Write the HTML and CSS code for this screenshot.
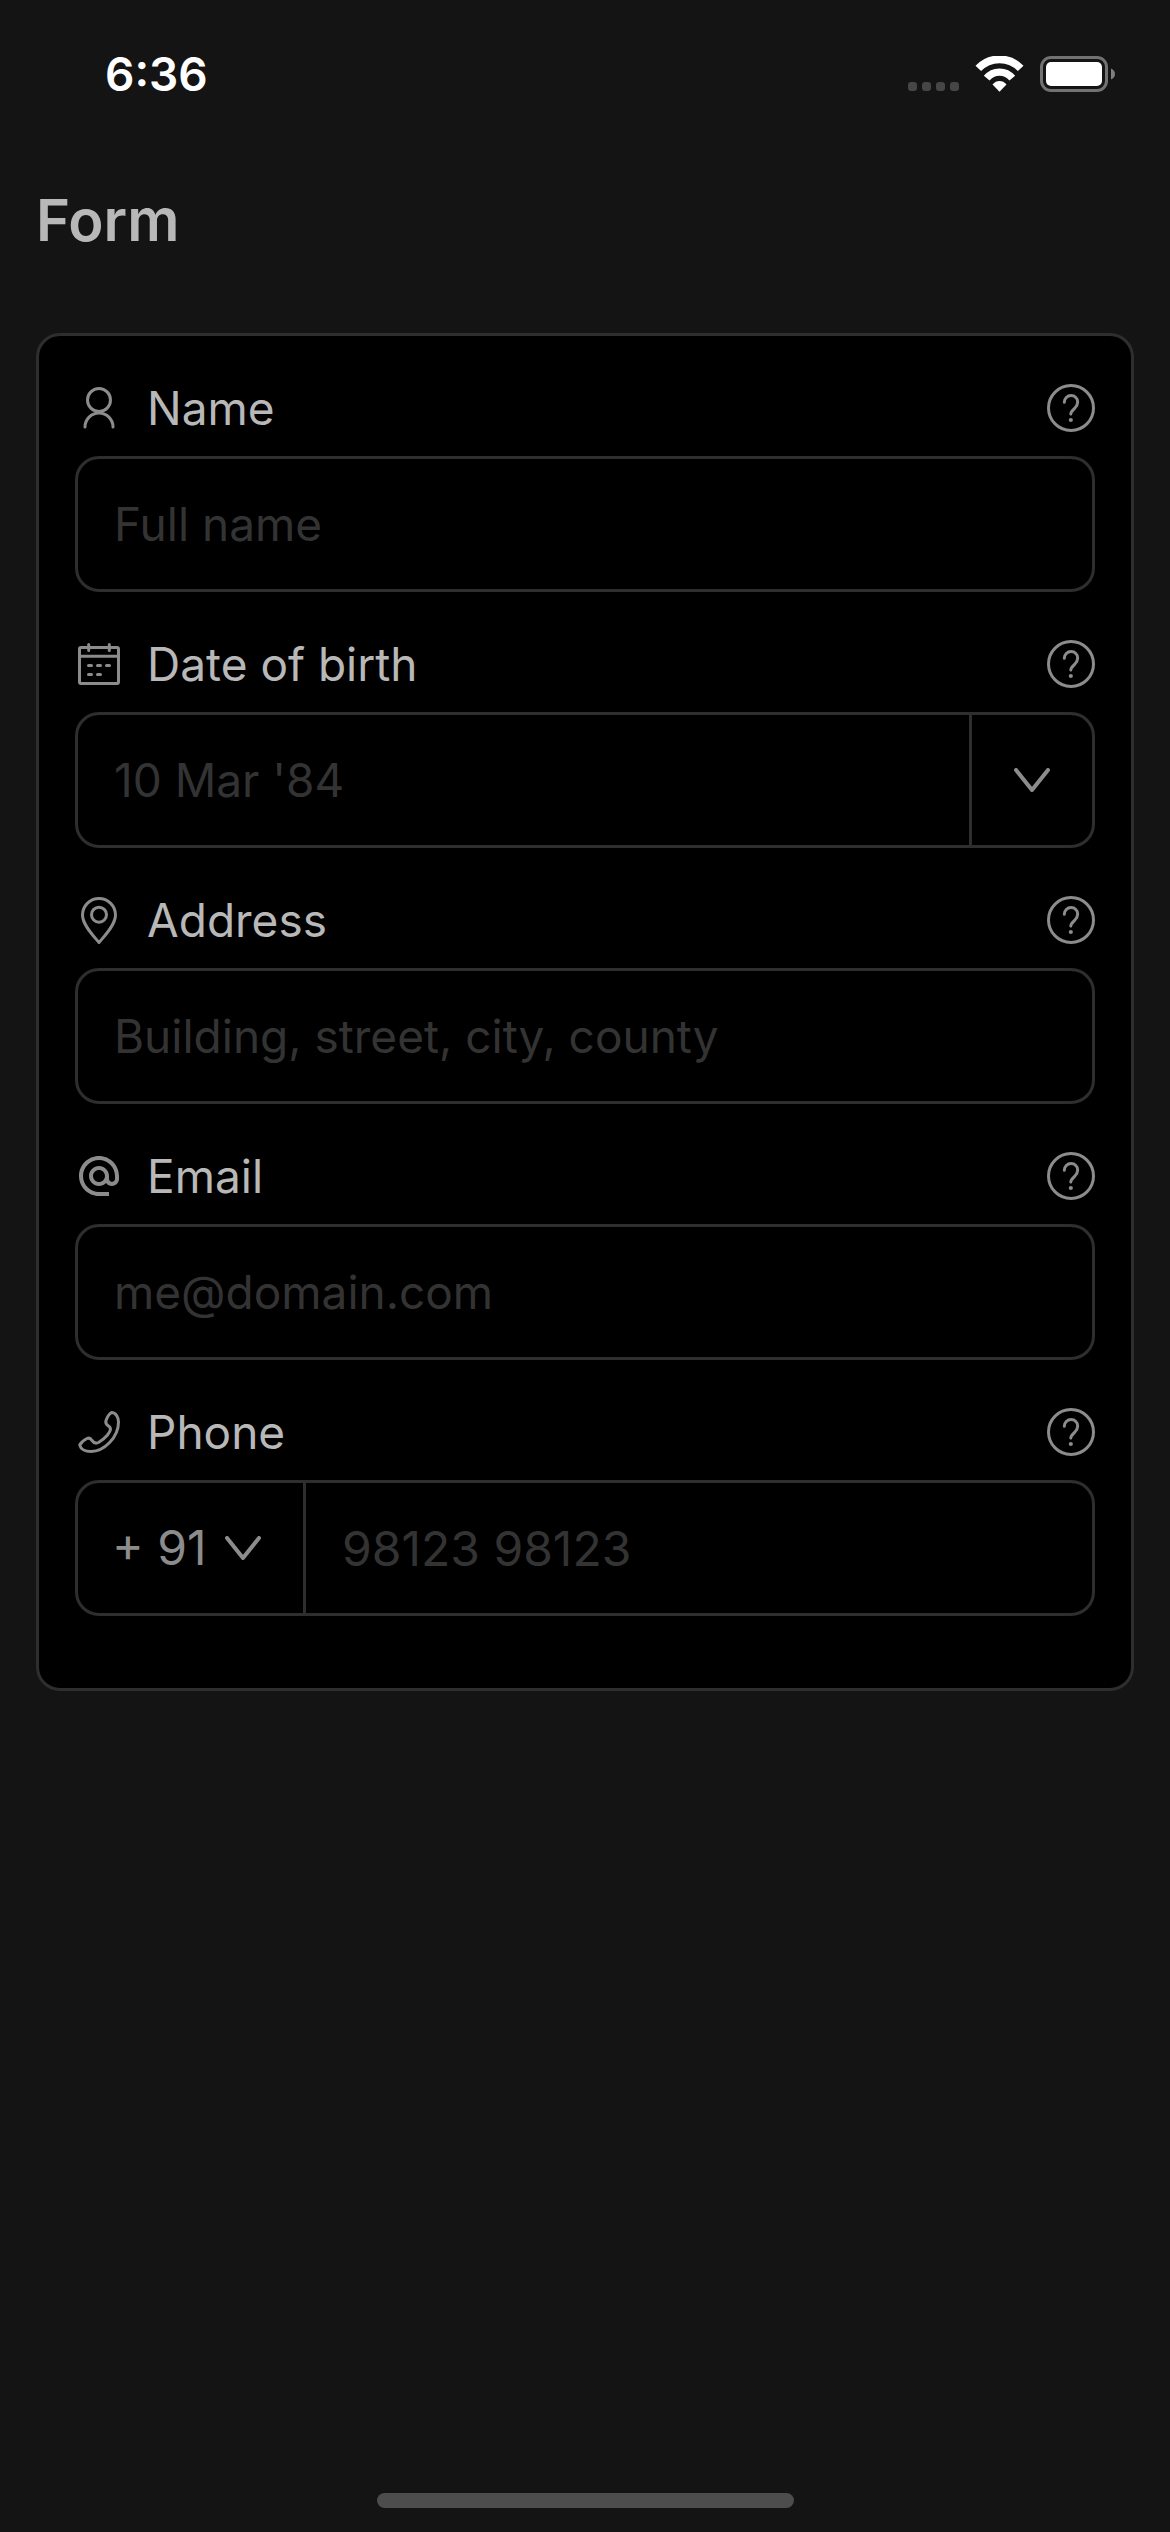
FILE: index.html
```html
<!DOCTYPE html>
<html lang="en">
<head>
<meta charset="utf-8">
<meta name="viewport" content="width=device-width, initial-scale=1">
<title>Form</title>
<link rel="stylesheet" href="styles.css">
</head>
<body>
<svg class="sprite" aria-hidden="true">
  <symbol id="help" viewBox="0 0 48 48">
    <circle cx="24" cy="24" r="22.5"/>
    <path d="M17.3 18.2A6.7 6.7 0 0 1 24 11.5C28 11.5 30.7 14.500 30.700 18C30.700 20.800 29.300 22.600 27.500 24.500C25.500 26.600 23.800 28 23.800 30"/>
    <circle class="solid" cx="23.800" cy="36" r="2.100"/>
  </symbol>
  <symbol id="chevron" viewBox="0 0 36 24">
    <path d="M2 2l16 20L34 2"/>
  </symbol>
</svg>

<header class="status">
  <time class="status-time">6:36</time>
  <div class="status-icons">
    <svg width="51" height="36" viewBox="0 0 51 36" fill="#464646" role="img" aria-label="No signal">
      <rect x="0" y="26" width="9" height="9" rx="3"/>
      <rect x="14" y="26" width="9" height="9" rx="3"/>
      <rect x="28" y="26" width="9" height="9" rx="3"/>
      <rect x="42" y="26" width="9" height="9" rx="3"/>
    </svg>
    <svg width="49" height="36" viewBox="0 0 49 36" fill="none" stroke="#fff" role="img" aria-label="Wi-Fi">
      <path stroke-width="7.700" d="M3.300 12.400A29.200 29.200 0 0 1 45.700 12.400"/>
      <path stroke-width="7.400" d="M11.700 22.200A16.600 16.600 0 0 1 37.300 22.200"/>
      <path fill="#fff" stroke="none" d="M24.500 35.700L17.500 28.400Q20.500 25 24.500 25T31.500 28.400Z"/>
    </svg>
    <svg width="75" height="36" viewBox="0 0 75 36" role="img" aria-label="Battery full">
      <rect x="1.500" y="1.500" width="65" height="33" rx="9.500" fill="none" stroke="#727272" stroke-width="3"/>
      <rect x="6" y="6" width="56" height="24" rx="5" fill="#fff"/>
      <path d="M71 12.500C73.500 13.500 75 15.500 75 18S73.500 22.500 71 23.500Z" fill="#7f7f7f"/>
    </svg>
  </div>
</header>

<main class="page">
  <h1 class="title">Form</h1>
  <form class="card">
    <div class="field">
      <div class="field-head">
        <svg class="icon" viewBox="0 0 48 48" aria-hidden="true">
          <circle cx="24" cy="16" r="11.500"/>
          <path d="M10 43A14 14 0 0 1 38 43"/>
        </svg>
        <label class="label" for="name">Name</label>
        <button class="help" type="button" aria-label="Help for name"><svg class="icon" aria-hidden="true"><use href="#help"/></svg></button>
      </div>
      <div class="control">
        <input class="input" id="name" type="text" placeholder="Full name">
      </div>
    </div>

    <div class="field">
      <div class="field-head">
        <svg class="icon" viewBox="0 0 48 48" aria-hidden="true">
          <rect x="4.500" y="7.500" width="39" height="36" rx="1.500"/>
          <path d="M4.500 16.200h39M13.700 4.500v6M34.300 4.500v6M13.500 25.500h3M22.500 25.500h3M31.500 25.500h3M13.500 34.500h3M22.500 34.500h3"/>
        </svg>
        <label class="label" for="dob">Date of birth</label>
        <button class="help" type="button" aria-label="Help for date of birth"><svg class="icon" aria-hidden="true"><use href="#help"/></svg></button>
      </div>
      <div class="control">
        <input class="input" id="dob" type="text" placeholder="10 Mar '84">
        <button class="picker" type="button" aria-label="Pick a date"><svg class="chevron" aria-hidden="true"><use href="#chevron"/></svg></button>
      </div>
    </div>

    <div class="field">
      <div class="field-head">
        <svg class="icon" viewBox="0 0 48 48" aria-hidden="true">
          <path d="M24 46.500C19 40.500 7.500 29 7.500 19A16.500 16.500 0 0 1 40.500 19C40.500 29 29 40.500 24 46.500Z"/>
          <circle cx="24" cy="18.700" r="7.500"/>
        </svg>
        <label class="label" for="address">Address</label>
        <button class="help" type="button" aria-label="Help for address"><svg class="icon" aria-hidden="true"><use href="#help"/></svg></button>
      </div>
      <div class="control">
        <input class="input" id="address" type="text" placeholder="Building, street, city, county">
      </div>
    </div>

    <div class="field">
      <div class="field-head">
        <svg class="icon" viewBox="0 0 24 24" aria-hidden="true">
          <path class="solid" d="M12 2C6.480 2 2 6.480 2 12s4.480 10 10 10h5v-2h-5c-4.340 0-8-3.660-8-8s3.660-8 8-8 8 3.660 8 8v1.430c0 .790-.710 1.570-1.500 1.570s-1.500-.780-1.500-1.570V12c0-2.760-2.240-5-5-5s-5 2.240-5 5 2.240 5 5 5c1.380 0 2.640-.560 3.540-1.470.650.890 1.770 1.470 2.960 1.470 1.970 0 3.500-1.600 3.500-3.570V12c0-5.520-4.480-10-10-10zm0 13c-1.660 0-3-1.340-3-3s1.340-3 3-3 3 1.340 3 3-1.340 3-3 3z"/>
        </svg>
        <label class="label" for="email">Email</label>
        <button class="help" type="button" aria-label="Help for email"><svg class="icon" aria-hidden="true"><use href="#help"/></svg></button>
      </div>
      <div class="control">
        <input class="input" id="email" type="email" placeholder="me@domain.com">
      </div>
    </div>

    <div class="field">
      <div class="field-head">
        <svg class="icon" viewBox="0 0 48 48" aria-hidden="true">
          <path d="M36.500 4.500C34 6 32 9.500 31 12.500C30.200 15 31.500 16.800 33.500 18C36.500 20 36 22.500 32.500 27C29.500 30.500 26 33 23.500 34.500C20.500 36 18.800 35 17 32.500C15.800 30.500 14 29.600 12 30.500C9 32 6 34.500 4.700 37C5.500 41 10 43.500 16 43.500C29 43.500 43.500 29.500 43.500 14C43.500 9.500 41 4.500 36.500 4.500Z"/>
        </svg>
        <label class="label" for="phone">Phone</label>
        <button class="help" type="button" aria-label="Help for phone"><svg class="icon" aria-hidden="true"><use href="#help"/></svg></button>
      </div>
      <div class="control">
        <div class="code">
          <select class="code-select" aria-label="Country code">
            <option>+ 91</option>
          </select>
          <svg class="chevron" aria-hidden="true"><use href="#chevron"/></svg>
        </div>
        <input class="input input-number" id="phone" type="tel" placeholder="98123 98123">
      </div>
    </div>
  </form>
</main>

<footer class="home"><div class="home-bar"></div></footer>
</body>
</html>
```
FILE: styles.css
```css
* {
  box-sizing: border-box;
}

body {
  margin: 0;
  min-height: 100vh;
  display: flex;
  flex-direction: column;
  background: #141414;
  color: #b8b8b8;
  font-family: Inter, "Liberation Sans", sans-serif;
  font-size: 46px;
  line-height: 48px;
}

button,
input,
select {
  margin: 0;
  padding: 0;
  border: 0;
  background: none;
  color: inherit;
  font: inherit;
}

.sprite {
  position: absolute;
  width: 0;
  height: 0;
}

.status {
  display: flex;
  align-items: center;
  justify-content: space-between;
  height: 148px;
  padding: 0 55px 0 105px;
}

.status-time {
  color: #fff;
  font-weight: 600;
}

.status-icons {
  display: flex;
  gap: 16px;
}

.page {
  flex: 1;
  padding: 0 36px;
}

.title {
  margin: 0 0 41px;
  font-size: 58px;
  font-weight: 600;
  line-height: 144px;
}

.card {
  display: flex;
  flex-direction: column;
  gap: 48px;
  padding: 48px 36px 72px;
  border: 3px solid #2e2e2e;
  border-radius: 24px;
  background: #000;
}

.field {
  display: flex;
  flex-direction: column;
  gap: 24px;
}

.field-head {
  display: flex;
  align-items: center;
  gap: 24px;
}

.label {
  flex: 1;
}

.icon,
.chevron {
  display: block;
  fill: none;
  stroke: #8c8c8c;
  stroke-width: 3px;
  stroke-linecap: round;
  stroke-linejoin: round;
}

.icon {
  width: 48px;
  height: 48px;
}

.chevron {
  width: 36px;
  height: 24px;
  stroke-width: 4px;
}

.solid {
  fill: #8c8c8c;
  stroke: none;
}

.control {
  display: flex;
  height: 136px;
  border: 3px solid #2e2e2e;
  border-radius: 24px;
  overflow: hidden;
}

.input {
  flex: 1;
  min-width: 0;
  padding: 0 36px;
}

.input::placeholder {
  color: #333;
  opacity: 1;
}

.input-number,
.code-select {
  font-size: 48px;
}

.picker {
  display: grid;
  place-items: center;
  width: 123px;
  border-left: 3px solid #2e2e2e;
}

.code {
  display: grid;
  align-items: center;
  width: 228px;
  border-right: 3px solid #2e2e2e;
}

.code > * {
  grid-area: 1 / 1;
}

.code-select {
  align-self: stretch;
  padding: 0 78px 0 34px;
  appearance: none;
  color: #8c8c8c;
}

.code .chevron {
  justify-self: end;
  margin-right: 42px;
  pointer-events: none;
}

.home {
  display: flex;
  justify-content: center;
  padding-bottom: 24px;
}

.home-bar {
  width: 417px;
  height: 15px;
  border-radius: 8px;
  background: #4d4d4d;
}
```
